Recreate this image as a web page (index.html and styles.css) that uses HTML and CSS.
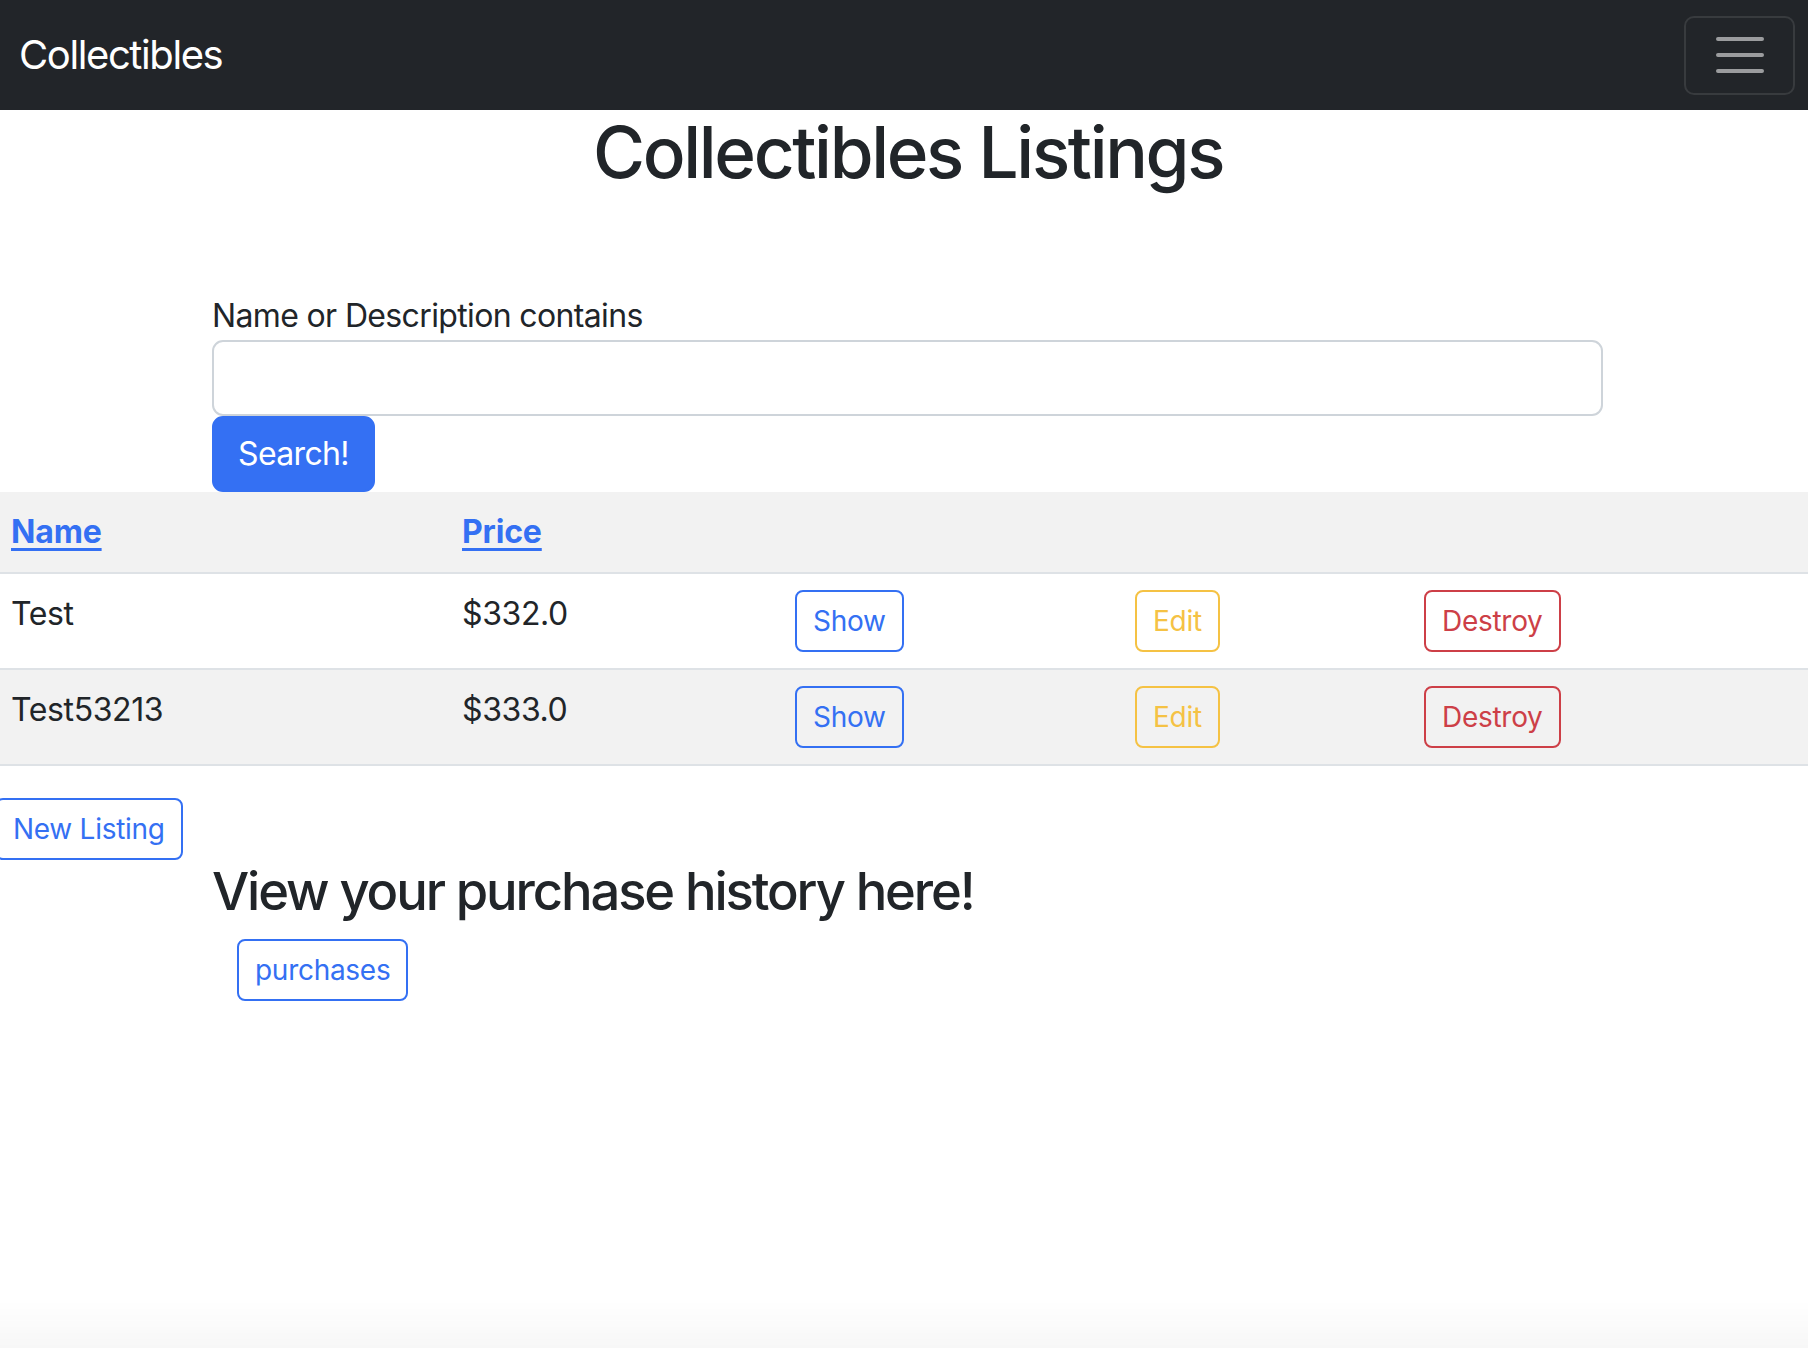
FILE: index.html
```html
<!DOCTYPE html>
<html lang="en">
<head>
<meta charset="utf-8">
<title>Collectibles</title>
<link rel="stylesheet" href="styles.css">
</head>
<body>
<nav class="navbar">
  <a class="brand" href="#">Collectibles</a>
  <button class="toggler" type="button" aria-label="Toggle navigation">
    <svg class="toggler-icon" viewBox="0 0 30 30" width="60" height="60" aria-hidden="true">
      <path d="M4 7h22M4 15h22M4 23h22" stroke="rgba(255,255,255,0.55)" stroke-width="2" stroke-linecap="round" fill="none"/>
    </svg>
  </button>
</nav>

<main>
  <h1 class="title">Collectibles Listings</h1>

  <div class="container">
    <form class="search-form">
      <label class="form-label" for="q">Name or Description contains</label>
      <input class="form-control" id="q" type="text">
      <button class="btn btn-primary" type="button">Search!</button>
    </form>
  </div>

  <table class="listing-table">
    <colgroup>
      <col class="c-name">
      <col class="c-price">
      <col class="c-show">
      <col class="c-edit">
      <col>
    </colgroup>
    <tr>
      <th><a class="sort-link" href="#">Name</a></th>
      <th><a class="sort-link" href="#">Price</a></th>
      <th></th>
      <th></th>
      <th></th>
    </tr>
    <tr>
      <td>Test</td>
      <td>$332.0</td>
      <td><a class="btn-sm outline-primary" href="#">Show</a></td>
      <td><a class="btn-sm outline-warning" href="#">Edit</a></td>
      <td><a class="btn-sm outline-danger" href="#">Destroy</a></td>
    </tr>
    <tr>
      <td>Test53213</td>
      <td>$333.0</td>
      <td><a class="btn-sm outline-primary" href="#">Show</a></td>
      <td><a class="btn-sm outline-warning" href="#">Edit</a></td>
      <td><a class="btn-sm outline-danger" href="#">Destroy</a></td>
    </tr>
  </table>

  <div class="new-row">
    <a class="btn-sm outline-primary new-listing" href="#">New Listing</a>
  </div>

  <div class="container">
    <h3 class="history-title">View your purchase history here!</h3>
    <div class="purchases-row">
      <a class="btn-sm outline-primary" href="#">purchases</a>
    </div>
  </div>
</main>

<div class="bottom-shade"></div>
</body>
</html>
```

FILE: styles.css
```css
* {
  box-sizing: border-box;
}

html, body {
  margin: 0;
  padding: 0;
  background: #ffffff;
}

body {
  font-family: Inter, "Liberation Sans", Arial, sans-serif;
  font-size: 32px;
  line-height: 1.5;
  color: #212529;
  letter-spacing: -0.02em;
  overflow-x: hidden;
}

/* ---------- Navbar ---------- */
.navbar {
  height: 110px;
  background: #222529;
  display: flex;
  align-items: center;
  justify-content: space-between;
  padding: 0 13px 0 19px;
}

.brand {
  color: #ffffff;
  text-decoration: none;
  font-size: 40px;
  line-height: 60px;
  letter-spacing: -0.035em;
}

.toggler {
  width: 111px;
  height: 79px;
  padding: 0;
  background: transparent;
  border: 2px solid rgba(255, 255, 255, 0.1);
  border-radius: 10px;
  display: flex;
  align-items: center;
  justify-content: center;
}

.toggler-icon {
  display: block;
}

/* ---------- Title ---------- */
.title {
  margin: 0 0 16px;
  padding-left: 8px;
  font-size: 71px;
  font-weight: 500;
  line-height: 1.2;
  text-align: center;
  letter-spacing: -0.033em;
}

/* ---------- Containers ---------- */
.container {
  width: 1391px;
  margin-left: 212px;
}

/* ---------- Search form ---------- */
.search-form {
  padding-top: 81px;
  display: flex;
  flex-direction: column;
  align-items: flex-start;
}

.form-label {
  display: block;
  line-height: 48px;
}

.form-control {
  display: block;
  width: 100%;
  height: 76px;
  border: 2px solid #ced4da;
  border-radius: 11px;
  background: #fff;
  font: inherit;
  padding: 0 24px;
}

.btn {
  display: inline-block;
  font: inherit;
  letter-spacing: inherit;
  height: 76px;
  line-height: 48px;
  padding: 12px 24px;
  border: 2px solid transparent;
  border-radius: 11px;
  cursor: pointer;
}

.btn-primary {
  background: #3470f3;
  border-color: #3470f3;
  color: #ffffff;
}

/* ---------- Table ---------- */
.listing-table {
  width: 100%;
  border-collapse: collapse;
  table-layout: fixed;
  margin-bottom: 32px;
}

.c-name { width: 451px; }
.c-price { width: 333px; }
.c-show { width: 340px; }
.c-edit { width: 289px; }

.listing-table th,
.listing-table td {
  padding: 16px 11px;
  text-align: left;
  vertical-align: top;
  border-bottom: 2px solid #dee2e6;
  line-height: 48px;
}

.listing-table th {
  font-weight: 700;
  letter-spacing: -0.005em;
}

.listing-table td {
  letter-spacing: -0.012em;
}

.listing-table tr:nth-child(odd) {
  background: #f2f2f2;
}

.sort-link {
  color: #3470f3;
  text-decoration: underline;
  text-decoration-thickness: 3px;
  text-underline-offset: 5px;
}

/* ---------- Small outline buttons ---------- */
.btn-sm {
  display: inline-block;
  vertical-align: top;
  font-size: 28px;
  line-height: 42px;
  padding: 8px 16px;
  border: 2px solid currentColor;
  border-radius: 8px;
  text-decoration: none;
  background: transparent;
  letter-spacing: -0.01em;
}

.outline-primary {
  color: #3470f3;
}

.outline-warning {
  color: #f5c244;
}

.outline-danger {
  color: #cd3f47;
}

/* ---------- Lower section ---------- */
.new-row {
  display: flex;
}

.new-listing {
  margin-left: -5px;
}

.history-title {
  margin: 0 0 16px;
  font-size: 52.5px;
  font-weight: 550;
  line-height: 1.2;
  letter-spacing: -0.04em;
}

.purchases-row {
  display: flex;
  padding-left: 25px;
}

/* ---------- Subtle bottom shading ---------- */
.bottom-shade {
  position: fixed;
  left: 0;
  right: 0;
  bottom: 0;
  height: 48px;
  pointer-events: none;
  background: linear-gradient(to bottom, rgba(0, 0, 0, 0), rgba(0, 0, 0, 0.03));
}
```
